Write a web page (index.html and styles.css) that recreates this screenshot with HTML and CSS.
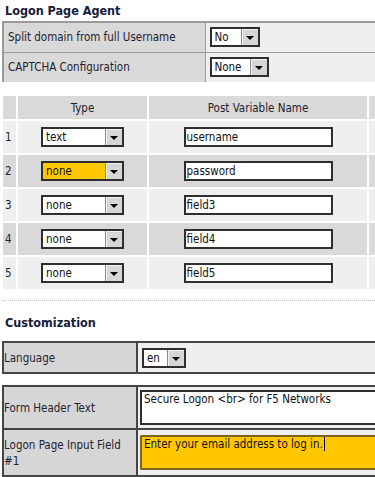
FILE: index.html
```html
<!DOCTYPE html>
<html lang="en">
<head>
  <meta charset="UTF-8">
  <meta name="viewport" content="width=device-width, initial-scale=1.0">
  <title>Logon Page Agent</title>
  <link rel="stylesheet" href="styles.css">
</head>
<body>
  <h3 class="section-title">Logon Page Agent</h3>

  <table class="props">
    <tr>
      <td class="label">Split domain from full Username</td>
      <td class="value">
        <span class="dd w-no"><span class="dd-val">No</span><span class="dd-btn"></span></span>
      </td>
    </tr>
    <tr>
      <td class="label">CAPTCHA Configuration</td>
      <td class="value">
        <span class="dd w-none"><span class="dd-val">None</span><span class="dd-btn"></span></span>
      </td>
    </tr>
  </table>

  <table class="fields">
    <tr class="head">
      <th class="c-num"></th>
      <th class="c-type">Type</th>
      <th class="c-name">Post Variable Name</th>
      <th class="c-extra"></th>
    </tr>
    <tr class="odd">
      <td class="c-num">1</td>
      <td class="c-type"><span class="dd w-type"><span class="dd-val">text</span><span class="dd-btn"></span></span></td>
      <td class="c-name"><span class="field">username</span></td>
      <td class="c-extra"></td>
    </tr>
    <tr class="even">
      <td class="c-num">2</td>
      <td class="c-type"><span class="dd w-type active"><span class="dd-val">none</span><span class="dd-btn"></span></span></td>
      <td class="c-name"><span class="field">password</span></td>
      <td class="c-extra"></td>
    </tr>
    <tr class="odd">
      <td class="c-num">3</td>
      <td class="c-type"><span class="dd w-type"><span class="dd-val">none</span><span class="dd-btn"></span></span></td>
      <td class="c-name"><span class="field">field3</span></td>
      <td class="c-extra"></td>
    </tr>
    <tr class="even">
      <td class="c-num">4</td>
      <td class="c-type"><span class="dd w-type"><span class="dd-val">none</span><span class="dd-btn"></span></span></td>
      <td class="c-name"><span class="field">field4</span></td>
      <td class="c-extra"></td>
    </tr>
    <tr class="odd">
      <td class="c-num">5</td>
      <td class="c-type"><span class="dd w-type"><span class="dd-val">none</span><span class="dd-btn"></span></span></td>
      <td class="c-name"><span class="field">field5</span></td>
      <td class="c-extra"></td>
    </tr>
  </table>

  <div class="divider"></div>

  <h3 class="section-title custom">Customization</h3>

  <table class="custom-table lang">
    <tr>
      <td class="label">Language</td>
      <td class="value">
        <span class="dd w-lang"><span class="dd-val">en</span><span class="dd-btn"></span></span>
      </td>
    </tr>
  </table>

  <table class="custom-table texts">
    <tr class="r-header">
      <td class="label">Form Header Text</td>
      <td class="value"><div class="textarea">Secure Logon &lt;br&gt; for F5 Networks</div></td>
    </tr>
    <tr class="r-input">
      <td class="label">Logon Page Input Field #1</td>
      <td class="value"><div class="textarea focused">Enter your email address to log in.<span class="caret"></span></div></td>
    </tr>
  </table>
</body>
</html>
```

FILE: styles.css
```css
* {
  box-sizing: border-box;
}

html, body {
  margin: 0;
  padding: 0;
  overflow: hidden;
}

body {
  width: 375px;
  height: 477px;
  background: #fff;
  font-family: "DejaVu Sans Condensed", "DejaVu Sans", sans-serif;
  font-size: 11.5px;
  color: #1e2230;
}

.section-title {
  margin: 0;
  padding: 3px 0 0 5px;
  height: 21px;
  font-size: 12.5px;
  font-weight: bold;
  line-height: 16px;
  color: #15203a;
}

/* top property table */
.props {
  margin-left: 2px;
  width: 430px;
  border-collapse: collapse;
  border: 2px solid #9a9a9a;
  border-bottom: none;
}

.props td {
  height: 30px;
  padding: 0;
  border-top: 1px solid #9a9a9a;
}

.props .label {
  width: 202px;
  padding-left: 4px;
  background: #d9d9d9;
  border-right: 1px solid #9a9a9a;
}

.props .value {
  padding-left: 4px;
  background: #efefef;
}

/* dropdowns */
.dd {
  display: inline-flex;
  vertical-align: middle;
  height: 20px;
  border: 2px solid #2e2e2e;
  background: #fff;
  color: #111;
  text-align: left;
}

.dd-val {
  flex: 1;
  padding-left: 3px;
  line-height: 16px;
  white-space: nowrap;
}

.dd-btn {
  width: 17px;
  display: flex;
  align-items: center;
  justify-content: center;
  background: #d6d6d6;
  border-left: 1px solid #8a8a8a;
  box-shadow: inset 1px 1px 0 #f4f4f4;
}

.dd-btn::after {
  content: '';
  border-top: 4px solid #000;
  border-left: 4px solid transparent;
  border-right: 4px solid transparent;
  margin-top: 2px;
}

.dd.active {
  background: #ffc800;
}

.w-no { width: 50px; }
.w-none { width: 59px; }
.w-type { width: 83px; }
.w-lang { width: 44px; }

/* post variables table */
.fields {
  margin: 12px 0 0 1px;
  border-spacing: 2px;
  width: 430px;
}

.fields th,
.fields td {
  padding: 0;
  text-align: center;
}

.fields .head th {
  height: 23px;
  font-weight: normal;
  background: #d9d9d9;
}

.fields td {
  height: 32px;
}

.fields .odd td {
  background: #efefef;
}

.fields .even td {
  background: #d9d9d9;
}

.fields .c-num {
  width: 13px;
  text-align: left;
  padding-left: 2px;
}

.fields .c-type {
  width: 129px;
}

.fields .c-name {
  width: 218px;
}

.field {
  display: inline-block;
  vertical-align: middle;
  width: 149px;
  height: 20px;
  padding-left: 1px;
  border: 2px solid #2e2e2e;
  background: #fff;
  color: #111;
  text-align: left;
  line-height: 16px;
}

.divider {
  margin: 9px 0 0 3px;
  border-top: 1px dotted #c4c4c4;
}

.section-title.custom {
  padding-top: 14px;
  height: 40px;
}

/* customization tables */
.custom-table {
  margin-left: 2px;
  width: 430px;
  border-collapse: collapse;
  border: 2px solid #454545;
}

.custom-table td {
  padding: 0;
  border: 2px solid #454545;
}

.custom-table .label {
  width: 134px;
  padding: 0 4px 0 0;
  background: #d6d6d6;
  line-height: 16px;
}

.custom-table .value {
  background: #efefef;
  padding-left: 4px;
}

.lang td {
  height: 31px;
}

.texts {
  margin-top: 11px;
}

.texts .r-header td {
  height: 43px;
}

.texts .r-input td {
  height: 47px;
}

.texts .value {
  padding: 2px 0 2px 2px;
  vertical-align: top;
}

.textarea {
  height: 35px;
  padding-left: 2px;
  border: 2px solid #2e2e2e;
  border-right: none;
  background: #fff;
  line-height: 15px;
  color: #111;
}

.r-header .textarea {
  margin-top: 1px;
  height: 35px;
}

.r-input .textarea {
  margin-top: 3px;
}

.textarea.focused {
  background: #ffc800;
  border-color: #7a6420;
  border-radius: 2px 0 0 2px;
}

.caret {
  display: inline-block;
  width: 1px;
  height: 14px;
  margin-left: 1px;
  vertical-align: -3px;
  background: #000;
}
```
